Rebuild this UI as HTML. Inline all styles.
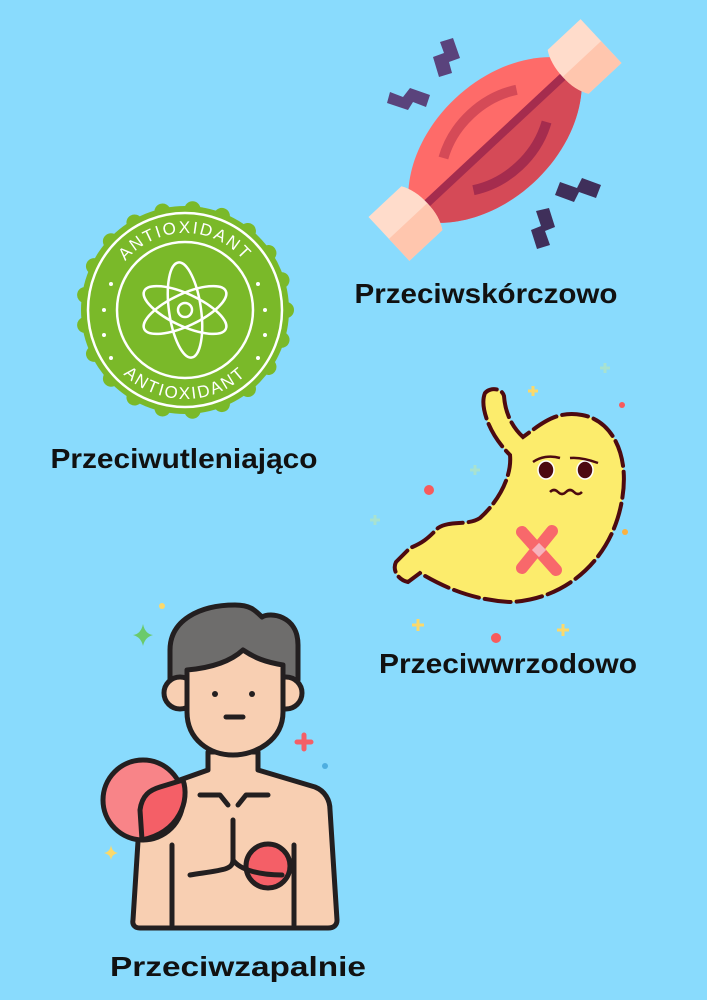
<!DOCTYPE html>
<html><head><meta charset="utf-8"><style>
html,body{margin:0;padding:0;background:#89dbfd;}
svg{display:block}
</style></head><body>
<svg width="707" height="1000" viewBox="0 0 707 1000" xmlns="http://www.w3.org/2000/svg" font-family="Liberation Sans, sans-serif">
<rect width="707" height="1000" fill="#89dbfd"/>

<!-- Muscle -->
<g transform="translate(495,140) rotate(-43)">
  <path d="M-100,-20 C-50,-70 50,-70 100,-20 L100,20 C50,70 -50,70 -100,20Z" fill="#fe6b69"/>
  <path d="M-100,0 L100,0 L100,20 C50,70 -50,70 -100,20Z" fill="#d54a57"/>
  <rect x="-100" y="-4" width="200" height="8" fill="#a52c4e"/>
  <path d="M-50,-22 C-20,-40 20,-40 50,-22" stroke="#d54a57" stroke-width="10" fill="none"/>
  <path d="M-50,22 C-20,40 20,40 50,22" stroke="#a52c4e" stroke-width="10" fill="none"/>
  <path d="M-145,-30 L-100,-30 C-90,-15 -90,15 -100,30 L-145,30Z" fill="#ffdccb"/>
  <path d="M-145,0 L-93,0 C-92,12 -95,22 -100,30 L-145,30Z" fill="#ffc6ae"/>
  <path d="M145,-30 L100,-30 C90,-15 90,15 100,30 L145,30Z" fill="#ffdccb"/>
  <path d="M145,0 L93,0 C92,12 95,22 100,30 L145,30Z" fill="#ffc6ae"/>
</g>
<g fill="#5a437c">
  <path d="M440,42 L453,38 L460,58 L449,62 L452,73 L439,77 L433,57 L444,53Z"/>
  <path d="M390,92 L403,97 L410,88 L430,95 L426,107 L413,102 L408,110 L387,103Z"/>
</g>
<g fill="#3f2f5a">
  <path d="M560,182 L577,188 L582,178 L601,185 L596,198 L579,192 L574,202 L555,195Z"/>
  <path d="M536,211 L549,208 L555,227 L545,231 L550,245 L537,249 L531,230 L541,226Z"/>
</g>
<text x="486" y="303" font-size="28" font-weight="bold" textLength="263" lengthAdjust="spacingAndGlyphs" text-anchor="middle" fill="#111">Przeciwskórczowo</text>

<!-- Badge -->
<g transform="translate(185,310)">
  <circle r="104" fill="#7ab929"/>
  <circle r="101" fill="none" stroke="#7ab929" stroke-width="16" stroke-linecap="round" stroke-dasharray="0.1 30.1"/>
  <circle r="97" fill="none" stroke="#fff" stroke-width="2.5"/>
  <circle r="68" fill="none" stroke="#fff" stroke-width="2.5"/>
  <defs>
    <path id="tp" d="M-77,0 A77,77 0 0 1 77,0"/>
    <path id="bp" d="M-89,0 A89,89 0 0 0 89,0"/>
  </defs>
  <text font-size="17" fill="#fff" letter-spacing="2"><textPath href="#tp" startOffset="50%" text-anchor="middle">ANTIOXIDANT</textPath></text>
  <text font-size="17" fill="#fff" letter-spacing="2"><textPath href="#bp" startOffset="50%" text-anchor="middle">ANTIOXIDANT</textPath></text>
  <g fill="#fff"><circle cx="-74" cy="-26" r="2"/><circle cx="-81" cy="0" r="2"/><circle cx="-81" cy="25" r="2"/><circle cx="-74" cy="48" r="2"/><circle cx="73" cy="-26" r="2"/><circle cx="80" cy="0" r="2"/><circle cx="80" cy="25" r="2"/><circle cx="73" cy="48" r="2"/></g>
  <g fill="none" stroke="#fff" stroke-width="2.5">
    <ellipse rx="16" ry="48" transform="rotate(-8)"/>
    <ellipse rx="45" ry="16" transform="rotate(25)"/>
    <ellipse rx="45" ry="16" transform="rotate(-25)"/>
    <circle r="7"/>
  </g>
</g>
<text x="184" y="468" font-size="28" font-weight="bold" textLength="267" lengthAdjust="spacingAndGlyphs" text-anchor="middle" fill="#111">Przeciwutleniająco</text>

<!-- Stomach -->
<g>
  <path d="M485,393 C480,405 487,432 510,455 C512,475 500,500 480,518 C468,526 450,520 438,528 C430,536 425,542 410,548 L396,562 C392,570 398,580 408,582 L420,573 C440,585 470,600 510,602 C565,600 612,560 622,500 C630,455 612,420 582,415 C555,410 540,425 523,437 C510,425 505,410 504,396 C502,388 490,387 485,393Z" fill="#fcec6c" stroke="#4d0a10" stroke-width="4" stroke-dasharray="26 6" stroke-linecap="round"/>
  <ellipse cx="546" cy="470" rx="8" ry="9" fill="#4d0a10" stroke="#fff" stroke-width="1.5"/>
  <ellipse cx="585" cy="470" rx="8" ry="9" fill="#4d0a10" stroke="#fff" stroke-width="1.5"/>
  <path d="M533,462 C540,457 550,455 560,458 M570,458 C580,457 590,460 598,463" stroke="#4d0a10" stroke-width="2.5" fill="none"/>
  <path d="M550,492 q4,-4 8,0 q4,4 8,0 q4,-4 8,0 q4,4 8,0" stroke="#4d0a10" stroke-width="2.5" fill="none"/>
  <path d="M522,532 L556,570 M552,531 L522,568" stroke="#f8686b" stroke-width="12" stroke-linecap="round"/>
  <rect x="534" y="545" width="10" height="10" fill="#f7b2bd" transform="rotate(45 539 550)"/>
</g>
<g fill="#fcd96a">
  <path d="M528,391 h10 M533,386 v10" stroke="#fcd96a" stroke-width="3"/>
  <path d="M412,625 h12 M418,619 v12" stroke="#fcd96a" stroke-width="3"/>
  <path d="M557,630 h12 M563,624 v12" stroke="#fcd96a" stroke-width="3"/>
  <path d="M370,520 h10 M375,515 v10 M470,470 h10 M475,465 v10 M600,368 h10 M605,363 v10" stroke="#a8e2d0" stroke-width="3"/>
</g>
<circle cx="429" cy="490" r="5" fill="#f75b5d"/>
<circle cx="622" cy="405" r="3" fill="#f75b5d"/>
<circle cx="496" cy="638" r="5" fill="#f75b5d"/>
<circle cx="625" cy="532" r="3" fill="#fbb140"/>
<text x="508" y="673" font-size="28" font-weight="bold" textLength="258" lengthAdjust="spacingAndGlyphs" text-anchor="middle" fill="#111">Przeciwwrzodowo</text>

<!-- Man -->
<g stroke="#231f20" stroke-width="5" stroke-linejoin="round" stroke-linecap="round">
  <path d="M133,920 L140,810 C142,795 150,790 160,787 L208,770 L208,752 L258,752 L258,770 L315,787 C325,791 330,800 330,810 L337,920 C337,925 334,928 328,928 L140,928 C135,928 132,925 133,920Z" fill="#f8cfb2"/>
  <circle cx="143" cy="800" r="40" fill="#f88488"/>
  <path d="M140,810 C142,795 150,790 160,787 L183,780 C190,800 180,832 142,840Z" fill="#f45f67"/>
  <path d="M170,680 L170,650 C170,620 200,605 235,605 C250,605 255,610 262,617 C270,612 298,615 298,645 L298,680Z" fill="#6e6d6c"/>
  <circle cx="180" cy="693" r="16" fill="#f8cfb2"/>
  <circle cx="286" cy="693" r="16" fill="#f8cfb2"/>
  <path d="M187,670 L187,712 C187,740 210,755 233,755 C256,755 283,740 283,712 L283,665 C265,662 255,658 243,650 C230,662 210,668 187,670Z" fill="#f8cfb2"/>
  <circle cx="268" cy="866" r="22" fill="#f45f67"/>
  <path d="M200,795 L220,795 L228,805 M238,805 L246,795 L268,795 M233,820 L233,860 C233,870 222,870 190,875 M233,860 C240,870 260,875 282,875 M172,845 L172,925 M294,845 L294,925" fill="none"/>
</g>
<g fill="#231f20"><circle cx="215" cy="694" r="3"/><circle cx="252" cy="694" r="3"/></g>
<path d="M226,717 L243,717" stroke="#231f20" stroke-width="5" stroke-linecap="round"/>
<path d="M143,624 Q145,634 153,635 Q145,637 143,646 Q141,637 133,635 Q141,634 143,624Z" fill="#6bca6c"/>
<path d="M111,845 Q112,852 118,853 Q112,854 111,860 Q110,854 104,853 Q110,852 111,845Z" fill="#fcd96a"/>
<circle cx="162" cy="606" r="3" fill="#fcd96a"/>
<path d="M297,742 h14 M304,735 v14" stroke="#f45f67" stroke-width="5" stroke-linecap="round"/>
<circle cx="325" cy="766" r="3" fill="#4eaee0"/>
<text x="238" y="976" font-size="28" font-weight="bold" textLength="256" lengthAdjust="spacingAndGlyphs" text-anchor="middle" fill="#111">Przeciwzapalnie</text>
</svg>
</body></html>
